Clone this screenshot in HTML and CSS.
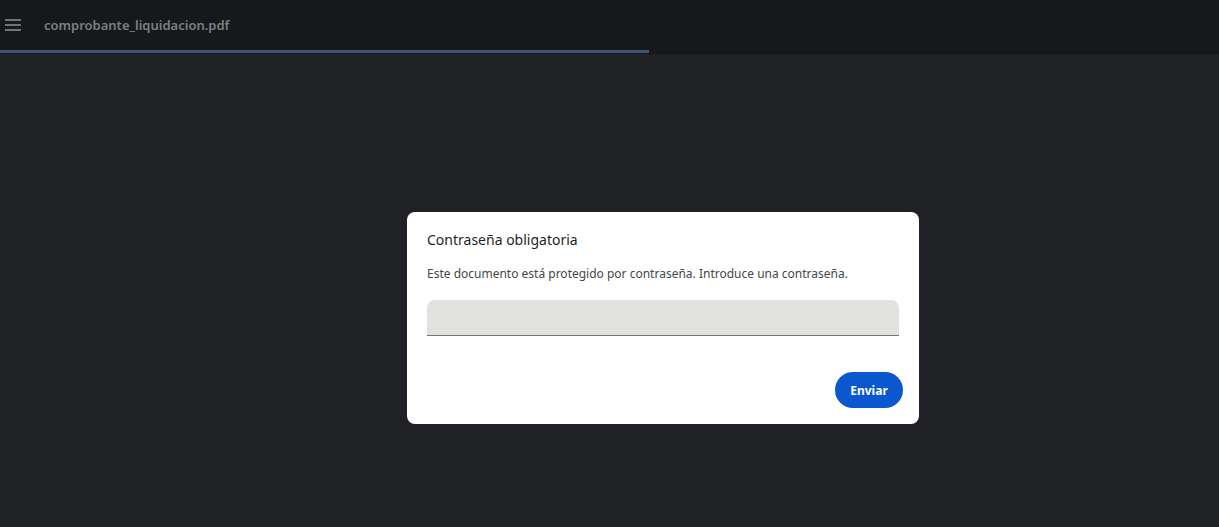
FILE: index.html
```html
<!DOCTYPE html>
<html lang="es">
<head>
<meta charset="utf-8">
<title>comprobante_liquidacion.pdf</title>
<link rel="stylesheet" href="styles.css">
</head>
<body>
<header class="toolbar">
  <div class="toolbar-row">
    <button class="menu-btn" aria-label="Menú">
      <svg width="16" height="12" viewBox="0 0 16 12"><rect x="0" y="0" width="16" height="2" fill="#6f7378"/><rect x="0" y="5" width="16" height="2" fill="#6f7378"/><rect x="0" y="10" width="16" height="2" fill="#6f7378"/></svg>
    </button>
    <span class="filename">comprobante_liquidacion.pdf</span>
  </div>
  <div class="progress"><div class="progress-fill" style="width:649px"></div></div>
</header>
<main class="viewer">
  <div class="dialog">
    <h2 class="dialog-title">Contraseña obligatoria</h2>
    <p class="dialog-text">Este documento está protegido por contraseña. Introduce una contraseña.</p>
    <div class="field"></div>
    <div class="actions">
      <button class="submit">Enviar</button>
    </div>
  </div>
</main>
</body>
</html>
```
FILE: styles.css
```css
* { box-sizing: border-box; }
html, body { margin: 0; padding: 0; height: 100%; }
body {
  background: #202124;
  font-family: "Noto Sans", "Open Sans", sans-serif;
  display: flex;
  flex-direction: column;
  overflow: hidden;
}
.toolbar {
  background: #17181a;
  height: 54px;
  display: flex;
  flex-direction: column;
  flex: none;
}
.toolbar-row {
  height: 50px;
  display: flex;
  align-items: center;
}
.menu-btn {
  background: none;
  border: 0;
  padding: 0;
  margin-left: 5px;
  width: 16px;
  height: 12px;
  display: flex;
}
.filename {
  margin-left: 23px;
  color: #7b7f85;
  font-size: 13px;
  font-weight: 600;
}
.progress {
  height: 3px;
  background: #17181a;
}
.progress-fill {
  height: 3px;
  background: #3d5478;
}
.viewer {
  flex: 1;
  display: flex;
  justify-content: flex-start;
  align-items: flex-start;
  padding-top: 158px;
  padding-left: 407px;
}
.dialog {
  width: 512px;
  height: 212px;
  background: #fff;
  border-radius: 8px;
  padding: 18px 20px 16px 20px;
  display: flex;
  flex-direction: column;
}
.dialog-title {
  margin: 0;
  font-size: 14px;
  font-weight: 400;
  color: #1f1f1f;
  line-height: 20px;
}
.dialog-text {
  margin: 15px 0 0 0;
  font-size: 12px;
  line-height: 17px;
  color: #444746;
}
.field {
  margin-top: 18px;
  height: 36px;
  background: #e1e2df;
  border-radius: 8px 8px 0 0;
  border-bottom: 1px solid #747775;
}
.actions {
  margin-top: 36px;
  display: flex;
  justify-content: flex-end;
  margin-right: -4px;
}
.submit {
  height: 36px;
  width: 68px;
  border: 0;
  border-radius: 18px;
  background: #0b57d0;
  color: #fff;
  font-family: "Noto Sans", "Open Sans", sans-serif;
  font-weight: 700;
  font-size: 12px;
  padding: 0;
}
```
